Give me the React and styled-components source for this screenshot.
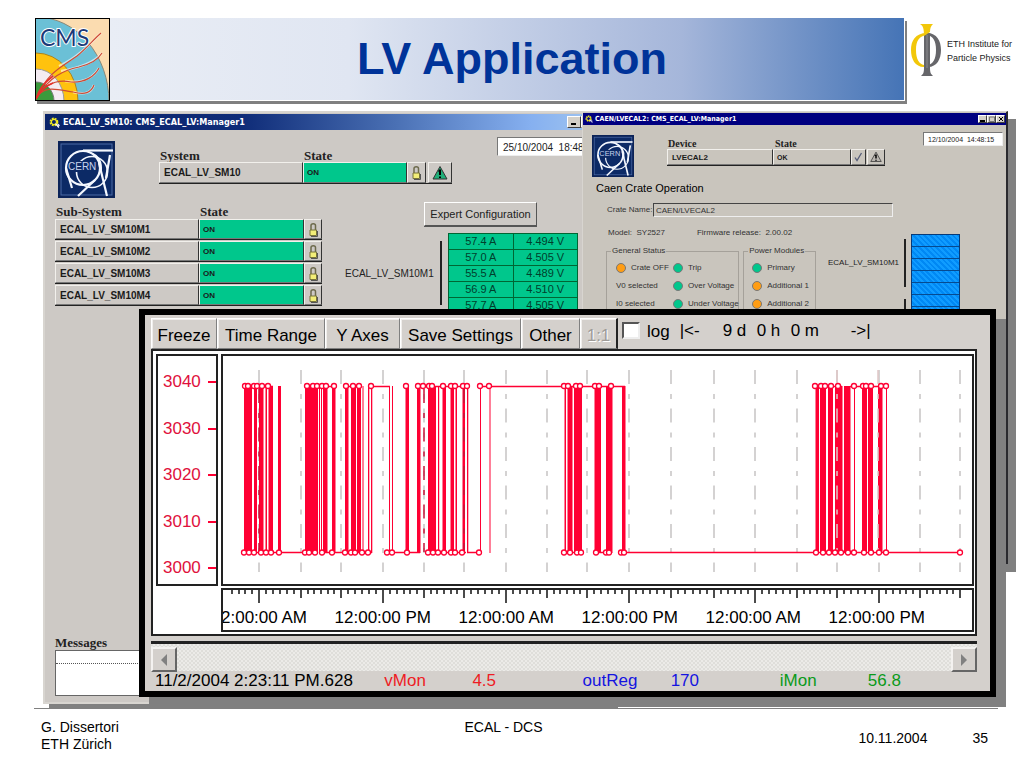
import React from "react";
import styled, { createGlobalStyle } from "styled-components";

const SANS = '"Liberation Sans", Arial, sans-serif';
const SERIF = '"Liberation Serif", "Times New Roman", serif';
const RED = "#ff0033";
const GREEN = "#00c78c";

const GlobalStyle = createGlobalStyle`
  * { box-sizing: border-box; }
  html, body { margin: 0; background: #fff; }
  body { font-family: ${SANS}; color: #000; }
  button, input { font-family: inherit; color: inherit; margin: 0; padding: 0; border-radius: 0; }
  svg { display: block; flex: none; }
`;

/* ---------- slide frame ---------- */

const Slide = styled.main`
  display: flex;
  flex-direction: column;
  min-width: 1024px;
  min-height: 100vh;
  padding-top: 18px;
`;

const Header = styled.header`
  display: flex;
  align-items: flex-start;
  padding: 0 12px 0 35px;
`;

const BannerGroup = styled.div`
  display: flex;
  flex: 1;
  height: 83px;
  border-right: 1px solid #fff;
  border-bottom: 1px solid #fff;
  box-shadow: 3px 4px 0 -1px #808080, 2px 3px 0 #808080;
`;

const Banner = styled.div`
  display: flex;
  flex: 1;
  align-items: center;
  justify-content: center;
  padding-left: 10px;
  background: linear-gradient(90deg, #e9edf5 0%, #e0e6f2 30%, #a5b6da 72%, #4574b6 100%);
`;

const Title = styled.h1`
  margin: 0;
  font-size: 45px;
  line-height: 50px;
  font-weight: bold;
  color: #003399;
`;

const Institute = styled.div`
  display: flex;
  align-items: center;
  gap: 5px;
  width: 107px;
  padding: 6px 0 0 6px;
  font-size: 9px;
  line-height: 14px;
  color: #222;
  white-space: nowrap;
`;

const Stage = styled.section`
  position: relative;
  flex: 1;
  min-height: 595px;
  margin-top: 10px;
`;

const Footer = styled.footer`
  display: grid;
  grid-template-columns: 423fr auto 445fr;
  margin: 1px 26px 0 34px;
  padding: 10px 10px 15px 7px;
  border-top: 1px solid #808080;
  font-size: 14px;
  line-height: 17px;
`;

const FooterRight = styled.div`
  display: flex;
  justify-content: flex-end;
  gap: 45px;
  padding-top: 11px;
`;

/* ---------- desktop windows ---------- */

const Window = styled.article`
  position: absolute;
  display: flex;
  flex-direction: column;
  background: ${(p) => p.$bg};
`;

const SystemWindow = styled(Window)`
  left: 43px;
  right: 412px;
  top: 0;
  bottom: 3px;
  border: 2px solid #d8d5d0;
  box-shadow: 6px 5px 0 #808080;
`;

const CrateWindow = styled(Window)`
  left: 582px;
  right: 16px;
  top: 0;
  bottom: 143px;
  border: 1px solid #d8d5d0;
  border-right: 2px solid #2a2a2e;
  border-bottom: 2px solid #2a2a2e;
  box-shadow: 8px 8px 0 #808080;
`;

const TrendWindow = styled(Window)`
  left: 139px;
  right: 28px;
  top: 198px;
  bottom: 10px;
  padding: 3px 13px 0 6px;
  border: 6px solid #000;
  box-shadow: 10px 10px 0 #808080;
`;

const TitleBar = styled.header`
  display: flex;
  align-items: center;
  gap: ${(p) => (p.$small ? 2 : 3)}px;
  flex: none;
  height: ${(p) => (p.$small ? 12 : 16)}px;
  margin-top: 1px;
  padding: 0 1px 0 ${(p) => (p.$small ? 2 : 4)}px;
  background: ${(p) =>
    p.$small ? "#000080" : "linear-gradient(90deg, #0a246a 0%, #0f2c78 35%, #4a70b4 62%, #86b0f0 86%, #a6caf0 100%)"};
  color: #fff;
  font: bold ${(p) => (p.$small ? 7 : 9)}px/12px "DejaVu Sans Condensed", "DejaVu Sans", sans-serif;
  white-space: nowrap;
`;

const WindowButtons = styled.div`
  display: flex;
  margin-left: auto;
`;

const WindowButton = styled.button`
  display: flex;
  align-items: center;
  justify-content: center;
  width: ${(p) => (p.$small ? 9 : 14)}px;
  height: ${(p) => (p.$small ? 8 : 12)}px;
  border: 1px solid;
  border-color: #fff #404040 #404040 #fff;
  background: #d4d0c8;
`;

const SystemBody = styled.div`
  display: flex;
  flex: 1;
  flex-direction: column;
  padding: 7px 9px 6px 10px;
`;

const SystemTop = styled.div`
  display: flex;
  align-items: flex-start;
  height: 65px;
`;

const LogoSlot = styled.div`
  margin: ${(p) => (p.$small ? "3px 0 0 0" : "4px 0 0 3px")};
`;

const StatusBlock = styled.div`
  margin-left: ${(p) => (p.$small ? 33 : 44)}px;
  padding-top: ${(p) => (p.$small ? 7 : 12)}px;
`;

const ColumnHeads = styled.div`
  display: grid;
  grid-template-columns: ${(p) => p.$cols};
  padding-left: 1px;
  font: bold ${(p) => (p.$small ? 10 : 13)}px/${(p) => (p.$small ? 10 : 13)}px ${SERIF};
  color: #222;
`;

const StateRow = styled.div`
  display: grid;
  grid-template-columns: ${(p) => p.$cols};
  height: ${(p) => p.$height}px;
  border-bottom: 1px solid #222;
`;

const Cell = styled.div`
  display: flex;
  align-items: center;
  padding: 1px 0 0 ${(p) => (p.$state ? 3 : 4)}px;
  border: 1px solid;
  border-color: #f2f0ec #333 #777 #f2f0ec;
  background: ${(p) => p.$fill || "transparent"};
  font-size: ${(p) => p.$size}px;
  line-height: 12px;
  font-weight: bold;
  color: #1a1a1a;
`;

const IconButton = styled.button`
  display: flex;
  align-items: center;
  justify-content: center;
  margin-left: ${(p) => p.$gap || 0}px;
  border: 1px solid;
  border-color: #f2f0ec #333 #777 #f2f0ec;
  background: transparent;
`;

const SystemMiddle = styled.div`
  display: flex;
  align-items: flex-start;
`;

const SubSystems = styled.div`
  display: flex;
  flex-direction: column;
  gap: 1px;
  padding-top: 3px;
`;

const TimeBox = styled.time`
  flex: ${(p) => (p.$small ? "none" : 1)};
  width: ${(p) => (p.$small ? 80 : 104)}px;
  height: ${(p) => (p.$small ? 14 : 19)}px;
  margin-left: ${(p) => (p.$small ? "auto" : "45px")};
  padding-left: ${(p) => (p.$small ? 4 : 5)}px;
  border: 1px solid;
  border-color: #777 #eee #eee #777;
  background: #fff;
  font-size: ${(p) => (p.$small ? 7 : 10)}px;
  line-height: ${(p) => (p.$small ? 13 : 20)}px;
  color: #222;
  white-space: pre;
`;

const Readings = styled.div`
  display: flex;
  flex-direction: column;
  margin-left: 23px;
`;

const ExpertButton = styled.button`
  align-self: flex-start;
  height: 24px;
  width: 113px;
  margin: 0 0 7px 79px;
  border: 1px solid;
  border-color: #fff #555 #555 #fff;
  box-shadow: 0 1px 0 #555;
  background: transparent;
  font-size: 11px;
  color: #222;
`;

const ModuleGroup = styled.div`
  display: flex;
  align-items: flex-start;
  font-size: ${(p) => (p.$small ? 8 : 10)}px;
  line-height: ${(p) => (p.$small ? 10 : 14)}px;
  color: #222;
`;

const ModuleName = styled.div`
  width: 95px;
  padding-top: 34px;
`;

const SmallModuleName = styled.div`
  width: 76px;
  margin-left: 12px;
  padding-top: 30px;
`;

const Bracket = styled.div`
  width: 2px;
  height: ${(p) => p.$height}px;
  margin-top: ${(p) => p.$gap}px;
  background: #222;
`;

const ReadingTable = styled.table`
  width: 130px;
  margin-left: 6px;
  border-collapse: collapse;
  table-layout: fixed;
  background: ${GREEN};
  font-size: 11px;
  line-height: 15px;
  color: #00402c;
  td { height: 16px; padding: 0; border: 1px solid #063; text-align: center; }
`;

const Messages = styled.div`
  margin-top: auto;
  font: bold 13px/14px ${SERIF};
  color: #222;
`;

const MessageBox = styled.div`
  height: 46px;
  border: 1px solid #666;
  background: #fff;
`;

const MessageLine = styled.div`
  height: 13px;
  border-bottom: 1px dotted #555;
`;

/* ---------- crate window ---------- */

const CrateBody = styled.div`
  padding: 7px 3px 0 9px;
  font-size: 8px;
  line-height: 10px;
  color: #333;
`;

const CrateTop = styled.div`
  display: flex;
  align-items: flex-start;
  height: 49px;
`;

const CrateHeading = styled.h2`
  margin: 0 0 8px 4px;
  font-size: 11px;
  line-height: 14px;
  font-weight: normal;
  color: #000;
`;

const NameLabel = styled.label`
  display: flex;
  align-items: center;
  margin: 0 110px 0 15px;
  white-space: nowrap;
`;

const NameInput = styled.input`
  width: 240px;
  height: 14px;
  margin-left: auto;
  padding-left: 2px;
  border: 1px solid;
  border-color: #444 #eee #eee #444;
  background: transparent;
  font-size: 8px;
`;

const CrateMiddle = styled.div`
  display: flex;
  align-items: flex-start;
  margin-left: 14px;
  padding-top: 11px;
`;

const StatusPanel = styled.div`
  width: 210px;
`;

const ModelLine = styled.div`
  display: flex;
  gap: 32px;
  padding: 0 0 8px 2px;
  white-space: pre;
`;

const Groups = styled.div`
  display: flex;
  gap: 4px;
`;

const Group = styled.fieldset`
  flex: ${(p) => p.$grow};
  min-width: 0;
  height: 100px;
  margin: 0;
  padding: 3px 0 0 ${(p) => p.$inset}px;
  border: 1px solid #a5a19a;
  legend { margin-left: ${(p) => 4 - p.$inset}px; padding: 0 1px; white-space: nowrap; }
`;

const LampGrid = styled.div`
  display: grid;
  grid-template-columns: ${(p) => p.$cols};
  grid-auto-rows: 18px;
  align-items: center;
  white-space: nowrap;
`;

const LampItem = styled.span`
  display: flex;
  align-items: center;
  gap: 5px;
`;

const Lamp = styled.i`
  width: 10px;
  height: 10px;
  border: 1px solid #777;
  border-radius: 50%;
  background: ${(p) => (p.$on ? GREEN : "#ff9d14")};
`;

const Brackets = styled.div`
  padding-top: 6px;
`;

const ChannelStack = styled.div`
  width: 49px;
  margin: 6px 0 0 5px;
  border: 1px solid #063a78;
  background: repeating-linear-gradient(45deg, #0088f4 0 2px, #109cff 2px 4px);
`;

const Channel = styled.div`
  height: 12px;
  border-bottom: 1px solid #064a90;
`;

/* ---------- trend window ---------- */

const ToolBar = styled.div`
  display: flex;
  align-items: stretch;
  height: 31px;
  font-size: 17px;
  line-height: 20px;
`;

const ToolButton = styled.button`
  width: ${(p) => p.$width}px;
  padding-top: 4px;
  border: 1px solid;
  border-color: #fff #808080 #808080 #fff;
  box-shadow: inset 1px 1px 0 #f0eeec;
  background: #d4d0cc;
  font-size: 17px;
  line-height: 20px;
  white-space: nowrap;
  &:last-of-type { border-right: 2px solid #222; }
  &:disabled { color: #a09c98; text-shadow: 1px 1px 0 #fff; }
`;

const LogOption = styled.label`
  display: flex;
  align-items: flex-start;
  gap: 7px;
  padding: 4px 0 0 4px;
`;

const LogCheck = styled.input`
  appearance: none;
  width: 18px;
  height: 17px;
  border: 2px solid;
  border-color: #555 #eee #eee #555;
  background: #fff;
`;

const SpanControl = styled.div`
  display: grid;
  grid-template-columns: 43px 34px 34px 60px auto;
  padding: 3px 0 0 10px;
`;

const ChartFrame = styled.div`
  display: grid;
  flex: 1;
  grid-template-columns: 62px 1fr;
  grid-template-rows: 1fr 44px;
  gap: 2px 3px;
  padding: 3px 1px 2px 3px;
  border: 2px solid #222;
  background: #fff;
`;

const YAxis = styled.div`
  display: flex;
  flex-direction: column;
  justify-content: space-between;
  padding: 16px 0 6px 5px;
  border: 2px solid #222;
  color: #e0103c;
  font-size: 17px;
  line-height: 20px;
`;

const YLabel = styled.div`
  display: flex;
  align-items: center;
  justify-content: space-between;
  &::after { content: ""; width: 8px; height: 2px; background: ${RED}; }
`;

const Plot = styled.div`
  min-width: 0;
  border: 2px solid #222;
  svg { width: 100%; height: 100%; }
`;

const XAxis = styled.div`
  grid-column: 2;
  min-width: 0;
  border: 2px solid #222;
  overflow: hidden;
  svg { width: 100%; height: 14px; }
`;

const XLabels = styled.div`
  display: flex;
  justify-content: space-between;
  margin-left: -2px;
  padding: 4px 47px 0 0;
  font-size: 17px;
  line-height: 20px;
  white-space: nowrap;
`;

const ScrollBar = styled.div`
  display: flex;
  justify-content: space-between;
  height: 30px;
  margin-top: 5px;
  padding-top: 3px;
  border-top: 3px solid #222;
  background: conic-gradient(#ecebe8 25%, #dfdeda 0 50%, #ecebe8 0 75%, #dfdeda 0) 0 0 / 4px 4px;
`;

const ScrollButton = styled.button`
  display: flex;
  align-items: center;
  justify-content: center;
  width: 26px;
  height: 25px;
  border: 2px solid;
  border-color: #f4f2f0 #666 #666 #f4f2f0;
  background: #d4d0cc;
`;

const Readout = styled.div`
  display: grid;
  grid-template-columns: 229fr 88fr 110fr 88fr 109fr 88fr 109fr;
  height: 20px;
  padding-left: 4px;
  font-size: 17px;
  line-height: 20px;
  white-space: nowrap;
`;

const Value = styled.span`
  color: ${(p) => p.$color};
`;

/* ---------- drawings ---------- */

function CmsLogo() {
  return (
    <svg width="75" height="83" viewBox="0 0 75 83" aria-label="CMS">
      <defs>
        <clipPath id="cms"><rect width="75" height="83" /></clipPath>
      </defs>
      <g clipPath="url(#cms)">
        <rect width="75" height="83" fill="#fbdcb0" />
        <ellipse cx="1" cy="84" rx="73" ry="85" fill="#6bc0d6" stroke="#8a8878" />
        <ellipse cx="1" cy="83" rx="42" ry="48" fill="#ffc20e" stroke="#a88420" />
        <ellipse cx="1" cy="83" rx="28" ry="32" fill="#f4ecf2" stroke="#999" />
        <ellipse cx="1" cy="83" rx="18" ry="19" fill="#3b9a3c" stroke="#777" />
        <g fill="none" stroke="#fff" strokeWidth="2.4" opacity=".6">
          <path d="M24 48C42 40 54 27 66 15M26 53C44 50 60 44 67 35M30 63C48 66 58 60 64 50M38 74C50 77 56 75 59 67" />
        </g>
        <g fill="none" stroke="#cf4a33" strokeWidth="1.2">
          <path d="M1 81C12 54 28 48 42 38C52 30 58 22 66 15" />
          <path d="M1 81C14 58 30 52 44 49C56 46 63 42 67 35" />
          <path d="M1 81C12 62 26 62 36 64C50 65 60 58 64 50" />
          <path d="M1 81C8 66 24 72 38 74C50 77 56 75 59 67" />
        </g>
        <path d="M1 81C4 70 10 64 18 58M1 81C5 73 10 68 18 65" fill="none" stroke="#e8302a" strokeWidth="1.6" />
        <text x="5" y="28" fontFamily="Lato, sans-serif" fontSize="23" fill="#1c3a78" stroke="#fff" strokeWidth="2" paintOrder="stroke">
          CMS
        </text>
      </g>
      <rect x=".5" y=".5" width="74" height="82" fill="none" stroke="#000" />
    </svg>
  );
}

function PhiLogo() {
  return (
    <svg width="31" height="53" viewBox="0 0 31 53" aria-hidden="true">
      <path d="M16 9C4 9 0 17 0 26S4 43 13 43V41C8 40 5 35 5 26S8 12 16 11Z" fill="#f2c70a" />
      <path d="M16 9C26 9 30 17 30 26S26 43 17 43V41C22 40 25 35 25 26S22 12 16 11Z" fill="#66666a" />
      <path d="M13 11L19 9V44C19 49 20 50 22 52H10C12 50 13 49 13 44Z" fill="#66666a" />
      <path d="M9 0H22C20 2 19 4 19 8L13 12C13 4 12 2 9 0Z" fill="#f2c70a" />
      <path d="M16 11V44" stroke="#8c8c90" />
    </svg>
  );
}

function CernLogo({ size }) {
  return (
    <svg width={size} height={size} viewBox="0 0 57 57" aria-label="CERN">
      <rect width="57" height="57" fill="#0b2358" />
      <rect x="3" y="3" width="51" height="51" fill="#0c2a66" stroke="#4a6aa6" />
      <g fill="none" stroke="#f4f8ff" strokeWidth="2.2">
        <circle cx="25" cy="27" r="17" />
        <circle cx="34" cy="31" r="15.500" strokeWidth="1.600" />
        <path d="M25 9.500H55" />
        <path d="M41 22L49 55" />
        <path d="M37 39L20 55" />
        <path d="M8 27L14 47" />
        <path d="M52 14L48 37" />
        <path d="M33 12C42 15 44 22 43 31" strokeWidth="1.600" />
      </g>
      <rect x="11" y="20" width="26" height="11" fill="#0c2a66" />
      <text x="10" y="29" fontFamily={SANS} fontSize="10" fill="#c8d4ee">CERN</text>
    </svg>
  );
}

function Gear({ size }) {
  return (
    <svg width={size} height={size} viewBox="0 0 10 10" aria-hidden="true">
      <circle cx="4.500" cy="4.500" r="3" fill="none" stroke="#f0ea20" strokeWidth="2" strokeDasharray="1.6 .8" />
      <circle cx="4.500" cy="4.500" r="2.300" fill="none" stroke="#f0ea20" />
      <path d="M6 6L9 9.500M8 6.500L9.500 8" stroke="#fff" strokeWidth="1.200" />
    </svg>
  );
}

function Lock() {
  return (
    <svg width="9" height="15" viewBox="0 0 9 15" aria-hidden="true">
      <path d="M2 8V3.500C2 1 6.500 1 6.500 3.500V8" fill="none" stroke="#6d6a4c" strokeWidth="1.500" />
      <path d="M1 8H7.500V13.500H1Z" fill="#f3ee78" stroke="#77733a" />
      <path d="M8.500 9V14.500H2" fill="none" stroke="#555" />
    </svg>
  );
}

function Warning({ size, fill }) {
  return (
    <svg width={size} height={size} viewBox="0 0 16 16" aria-hidden="true">
      <path d="M8 1.500L15 14H1Z" fill={fill} stroke="#333" />
      <path d="M8 4.500V10M8 11.500V13" stroke="#000" strokeWidth="2" />
      <path d="M6 6H8" stroke="#000" />
    </svg>
  );
}

function Check() {
  return (
    <svg width="9" height="10" viewBox="0 0 9 10" aria-hidden="true">
      <path d="M1 5.500L3 8.500L7.500 1" fill="none" stroke="#555c78" strokeWidth="1.300" />
    </svg>
  );
}

const gridX = [259, 301, 341, 383, 424, 464, 506, 547, 587, 629, 671, 714, 755, 797, 837, 879, 920, 960];
const majorX = [259, 383, 506, 629, 755, 879];

// Each pair is the left and right edge of a stretch where the value switches back and forth.
const bursts = [
  [244, 252], [254, 257], [259, 263.5], [265.5, 267], [268.5, 273], [278, 281],
  [305, 318], [319, 320], [321, 322], [323, 327.500], [332, 335.500], [345, 348.500],
  [351, 356], [357, 361], [362.500, 363.500], [368, 369.300], [371, 372.300], [389, 390], [392, 393],
  [405.500, 409], [417, 420.500], [428, 436], [438, 439.200], [442.500, 446], [450.500, 454],
  [455.500, 457], [462.500, 465], [467, 468.300], [480, 481], [489.500, 490.500],
  [564.500, 566], [567.500, 572.500], [574, 582], [594.500, 601], [606, 612.500], [622, 625.500],
  [815.500, 819], [820, 826], [828, 833], [835, 842.500], [844, 850.500], [854, 855],
  [862, 867], [868, 873], [878, 882.500], [886, 887],
];
const topLines = [[244, 273], [305, 335], [345, 361], [370, 390], [428, 468], [480, 565], [565, 625], [815, 842], [850, 887]];
const bottomLines = [[244, 305], [323, 372], [392, 420], [428, 466], [467, 480], [565, 582], [595, 612], [625, 960]];
const topDots = [
  245, 248, 254, 257, 262, 268, 307, 313, 317, 322, 326, 334, 346, 353, 359, 371, 406, 418, 423, 429, 432,
  443, 451, 455, 463, 467, 480, 489, 564, 568, 576, 580, 595, 599, 611, 815, 821, 825, 831, 838, 854, 863,
  866, 871, 881, 886,
];
const bottomDots = [
  244, 249, 254, 261, 266, 271, 279, 305, 309, 315, 322, 332, 345, 351, 355, 362, 368, 387, 392, 407, 428,
  433, 438, 444, 451, 455, 462, 479, 564, 570, 577, 581, 596, 606, 609, 621, 624, 816, 823, 829, 835, 841,
  848, 854, 864, 871, 879, 886, 960,
];

function TrendPlot() {
  return (
    <svg viewBox="223 356 749 228" preserveAspectRatio="none" role="img" aria-label="Trend">
      <g stroke="#c6c4c4" strokeWidth="1.500" strokeDasharray="14 10 5 9.5">
        {gridX.map((x) => <path key={x} d={`M${x} 370V572`} />)}
      </g>
      <g fill={RED}>
        {bursts.map(([a, b]) => <rect key={a} x={a} y="386" width={b - a} height="167" />)}
      </g>
      <g stroke={RED} strokeWidth="1.500">
        {topLines.map(([a, b]) => <path key={a} d={`M${a} 386.500H${b}`} />)}
        {bottomLines.map(([a, b]) => <path key={a} d={`M${a} 552.500H${b}`} />)}
      </g>
      <g strokeWidth="1.500" strokeDasharray="14 10 5 9.5">
        {[259, 424, 464].map((x) => <path key={x} d={`M${x} 389V552`} stroke="#c8143a" />)}
        {[837, 878].map((x) => <path key={x} d={`M${x} 370V550`} stroke="#e0c8c8" />)}
      </g>
      <g fill="#fff" stroke={RED} strokeWidth="1.300">
        {topDots.map((x) => <circle key={x} cx={x} cy="386" r="2.500" />)}
        {bottomDots.map((x) => <circle key={x} cx={x} cy="552.500" r="2.500" />)}
      </g>
    </svg>
  );
}

function TimeTicks() {
  const ticks = [];
  [218, ...gridX].forEach((x, i, all) => {
    const next = all[i + 1];
    if (i > 0) ticks.push(`M${x} 0V${majorX.includes(x) ? 13 : 8}`);
    if (next) for (let k = i === 0 ? 2 : 1; k < 6; k += 1) ticks.push(`M${Math.round(x + ((next - x) * k) / 6)} 0V4`);
  });
  return (
    <svg viewBox="223 0 749 14" preserveAspectRatio="none" aria-hidden="true">
      <path d={ticks.join("")} stroke="#111" strokeWidth="1.500" />
    </svg>
  );
}

function TitleButtons({ small }) {
  return (
    <WindowButtons>
      <WindowButton $small={small} aria-label="Minimize">
        <svg width="6" height="6" viewBox="0 0 6 6"><path d="M0 5H5" stroke="#000" strokeWidth="2" /></svg>
      </WindowButton>
      <WindowButton $small={small} aria-label="Maximize">
        <svg width="6" height="6" viewBox="0 0 6 6"><path d="M.5 1H5.500V5.500H.5Z" fill="none" stroke="#777" /></svg>
      </WindowButton>
      <WindowButton $small={small} aria-label="Close">
        <svg width="6" height="6" viewBox="0 0 6 6"><path d="M1 1L5 5M5 1L1 5" stroke="#000" /></svg>
      </WindowButton>
    </WindowButtons>
  );
}

/* ---------- windows ---------- */

const subSystems = ["ECAL_LV_SM10M1", "ECAL_LV_SM10M2", "ECAL_LV_SM10M3", "ECAL_LV_SM10M4"];
const readings = [["57.4 A", "4.494 V"], ["57.0 A", "4.505 V"], ["55.5 A", "4.489 V"], ["56.9 A", "4.510 V"], ["57.7 A", "4.505 V"]];

function EcalSystem() {
  return (
    <SystemWindow $bg="#cdc9c5">
      <TitleBar>
        <Gear size={11} />
        ECAL_LV_SM10: CMS_ECAL_LV:Manager1
        <TitleButtons />
      </TitleBar>
      <SystemBody>
        <SystemTop>
          <LogoSlot><CernLogo size={57} /></LogoSlot>
          <StatusBlock>
            <ColumnHeads $cols="144px 104px"><span>System</span><span>State</span></ColumnHeads>
            <StateRow $cols="144px 104px 19px 26px" $height={22}>
              <Cell $size={10}>ECAL_LV_SM10</Cell>
              <Cell $size={8} $state $fill={GREEN}>ON</Cell>
              <IconButton aria-label="Lock"><Lock /></IconButton>
              <IconButton $gap={2} aria-label="Alarm"><Warning size={16} fill="#1fae78" /></IconButton>
            </StateRow>
          </StatusBlock>
          <TimeBox>25/10/2004  18:48</TimeBox>
        </SystemTop>
        <SystemMiddle>
          <SubSystems>
            <ColumnHeads $cols="144px 104px"><span>Sub-System</span><span>State</span></ColumnHeads>
            {subSystems.map((name) => (
              <StateRow key={name} $cols="144px 105px 18px" $height={21}>
                <Cell $size={10}>{name}</Cell>
                <Cell $size={8} $state $fill={GREEN}>ON</Cell>
                <IconButton aria-label={`Lock ${name}`}><Lock /></IconButton>
              </StateRow>
            ))}
          </SubSystems>
          <Readings>
            <ExpertButton>Expert Configuration</ExpertButton>
            <ModuleGroup>
              <ModuleName>ECAL_LV_SM10M1</ModuleName>
              <Bracket $height={64} $gap={8} />
              <ReadingTable>
                <tbody>
                  {readings.map(([amp, volt]) => (
                    <tr key={amp}><td>{amp}</td><td>{volt}</td></tr>
                  ))}
                </tbody>
              </ReadingTable>
            </ModuleGroup>
          </Readings>
        </SystemMiddle>
        <Messages>
          Messages
          <MessageBox><MessageLine /></MessageBox>
        </Messages>
      </SystemBody>
    </SystemWindow>
  );
}

function CaenCrate() {
  return (
    <CrateWindow $bg="#c9c5bd">
      <TitleBar $small>
        <Gear size={8} />
        CAEN/LVECAL2: CMS_ECAL_LV:Manager1
        <TitleButtons small />
      </TitleBar>
      <CrateBody>
        <CrateTop>
          <LogoSlot $small><CernLogo size={42} /></LogoSlot>
          <StatusBlock $small>
            <ColumnHeads $small $cols="107px 78px"><span>Device</span><span>State</span></ColumnHeads>
            <StateRow $cols="106px 78px 15px 19px" $height={17}>
              <Cell $size={8}>LVECAL2</Cell>
              <Cell $size={7} $state>OK</Cell>
              <IconButton aria-label="Acknowledge"><Check /></IconButton>
              <IconButton $gap={1} aria-label="Alarm"><Warning size={12} fill="#b8b4ae" /></IconButton>
            </StateRow>
          </StatusBlock>
          <TimeBox $small>12/10/2004  14:48:15</TimeBox>
        </CrateTop>
        <CrateHeading>Caen Crate Operation</CrateHeading>
        <NameLabel>
          Crate Name:
          <NameInput defaultValue="CAEN/LVECAL2" />
        </NameLabel>
        <CrateMiddle>
          <StatusPanel>
            <ModelLine><span>Model:  SY2527</span><span>Firmware release:  2.00.02</span></ModelLine>
            <Groups>
              <Group $grow={136} $inset={9}>
                <legend>General Status</legend>
                <LampGrid $cols="57px 1fr">
                  <LampItem><Lamp />Crate OFF</LampItem>
                  <LampItem><Lamp $on />Trip</LampItem>
                  <span>V0 selected</span>
                  <LampItem><Lamp $on />Over Voltage</LampItem>
                  <span>I0 selected</span>
                  <LampItem><Lamp $on />Under Voltage</LampItem>
                </LampGrid>
              </Group>
              <Group $grow={70} $inset={8}>
                <legend>Power Modules</legend>
                <LampGrid $cols="1fr">
                  <LampItem><Lamp $on />Primary</LampItem>
                  <LampItem><Lamp />Additional 1</LampItem>
                  <LampItem><Lamp />Additional 2</LampItem>
                </LampGrid>
              </Group>
            </Groups>
          </StatusPanel>
          <ModuleGroup $small>
            <SmallModuleName>ECAL_LV_SM10M1</SmallModuleName>
            <Brackets>
              <Bracket $height={48} $gap={5} />
              <Bracket $height={48} $gap={12} />
            </Brackets>
            <ChannelStack>
              {Array.from({ length: 9 }, (_, i) => <Channel key={i} />)}
            </ChannelStack>
          </ModuleGroup>
        </CrateMiddle>
      </CrateBody>
    </CrateWindow>
  );
}

function Trend() {
  return (
    <TrendWindow $bg="#d4d0cc">
      <ToolBar>
        <ToolButton $width={66}>Freeze</ToolButton>
        <ToolButton $width={108}>Time Range</ToolButton>
        <ToolButton $width={75}>Y Axes</ToolButton>
        <ToolButton $width={121}>Save Settings</ToolButton>
        <ToolButton $width={59}>Other</ToolButton>
        <ToolButton $width={38} disabled>1:1</ToolButton>
        <LogOption><LogCheck type="checkbox" />log</LogOption>
        <SpanControl>
          <span>|&lt;-</span><span>9 d</span><span>0 h</span><span>0 m</span><span>-&gt;|</span>
        </SpanControl>
      </ToolBar>
      <ChartFrame>
        <YAxis>
          {[3040, 3030, 3020, 3010, 3000].map((v) => <YLabel key={v}>{v}</YLabel>)}
        </YAxis>
        <Plot><TrendPlot /></Plot>
        <XAxis>
          <TimeTicks />
          <XLabels>
            <span>2:00:00 AM</span><span>12:00:00 PM</span><span>12:00:00 AM</span>
            <span>12:00:00 PM</span><span>12:00:00 AM</span><span>12:00:00 PM</span>
          </XLabels>
        </XAxis>
      </ChartFrame>
      <ScrollBar>
        <ScrollButton aria-label="Scroll left">
          <svg width="8" height="12" viewBox="0 0 8 12"><path d="M7 0V12L1 6Z" fill="#808080" /></svg>
        </ScrollButton>
        <ScrollButton aria-label="Scroll right">
          <svg width="8" height="12" viewBox="0 0 8 12"><path d="M1 0V12L7 6Z" fill="#808080" /></svg>
        </ScrollButton>
      </ScrollBar>
      <Readout>
        <span>11/2/2004 2:23:11 PM.628</span>
        <Value $color="#ee1c24">vMon</Value>
        <Value $color="#ee1c24">4.5</Value>
        <Value $color="#1414e0">outReg</Value>
        <Value $color="#1414e0">170</Value>
        <Value $color="#0a9a1a">iMon</Value>
        <Value $color="#0a9a1a">56.8</Value>
      </Readout>
    </TrendWindow>
  );
}

export default function App() {
  return (
    <>
      <GlobalStyle />
      <Slide>
        <Header>
          <BannerGroup>
            <CmsLogo />
            <Banner><Title>LV Application</Title></Banner>
          </BannerGroup>
          <Institute>
            <PhiLogo />
            <div>ETH Institute for<br />Particle Physics</div>
          </Institute>
        </Header>
        <Stage>
          <EcalSystem />
          <CaenCrate />
          <Trend />
        </Stage>
        <Footer>
          <div>G. Dissertori<br />ETH Zürich</div>
          <div>ECAL - DCS</div>
          <FooterRight><span>10.11.2004</span><span>35</span></FooterRight>
        </Footer>
      </Slide>
    </>
  );
}
